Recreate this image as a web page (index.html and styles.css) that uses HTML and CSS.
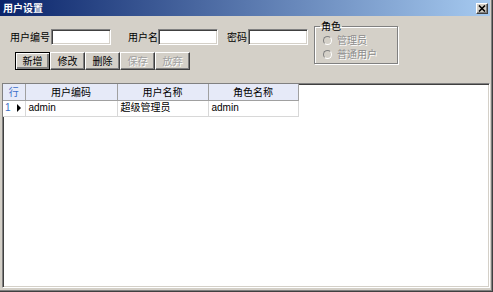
FILE: index.html
```html
<!DOCTYPE html>
<html lang="zh-CN">

<head>
    <meta charset="UTF-8">
    <title>用户设置</title>
    <link rel="stylesheet" href="styles.css">
</head>

<body>
    <div class="window">
        <div class="titlebar">
            <span class="title">用户设置</span>
            <span class="close-btn">
                <svg width="8" height="7" viewBox="0 0 8 7">
                    <path d="M1 0.5 L7 6.5 M7 0.5 L1 6.5" stroke="#000" stroke-width="1.6" />
                </svg>
            </span>
        </div>

        <div class="top">
            <div class="left">
                <div class="fields">
                    <label class="lbl">用户编号</label>
                    <span class="input"></span>
                    <label class="lbl lbl-name">用户名</label>
                    <span class="input"></span>
                    <label class="lbl lbl-pwd">密码</label>
                    <span class="input"></span>
                </div>
                <div class="toolbar">
                    <button class="btn btn-default">新增</button>
                    <button class="btn">修改</button>
                    <button class="btn">删除</button>
                    <button class="btn" disabled>保存</button>
                    <button class="btn" disabled>放弃</button>
                </div>
            </div>

            <fieldset class="group">
                <legend>角色</legend>
                <div class="radio"><span class="dot"></span>管理员</div>
                <div class="radio"><span class="dot"></span>普通用户</div>
            </fieldset>
        </div>

        <div class="grid">
            <table>
                <colgroup>
                    <col style="width: 22px">
                    <col style="width: 92px">
                    <col style="width: 91px">
                    <col style="width: 90px">
                </colgroup>
                <thead>
                    <tr>
                        <th class="ind">行</th>
                        <th>用户编码</th>
                        <th>用户名称</th>
                        <th>角色名称</th>
                    </tr>
                </thead>
                <tbody>
                    <tr>
                        <td class="ind"><span class="num">1</span><span class="arrow"></span></td>
                        <td>admin</td>
                        <td>超级管理员</td>
                        <td>admin</td>
                    </tr>
                </tbody>
            </table>
        </div>
    </div>
</body>

</html>
```

FILE: styles.css
```css
* {
    margin: 0;
    padding: 0;
    box-sizing: border-box;
}

body {
    width: 493px;
    height: 292px;
    overflow: hidden;
    font-family: "Liberation Sans", "Noto Sans CJK SC", sans-serif;
    font-size: 10px;
    line-height: 12px;
    color: #000;
    background: #d4d0c8;
}

/* Janela */
.window {
    width: 493px;
    height: 292px;
    display: flex;
    flex-direction: column;
    background: #d4d0c8;
    box-shadow: inset -1px -1px #404040, inset -2px -2px #808080, inset -3px -3px #d4d0c8;
}

.titlebar {
    height: 16px;
    margin-right: 3px;
    display: flex;
    align-items: center;
    justify-content: space-between;
    padding: 0 2px 0 3px;
    background: linear-gradient(to right, #0a246a, #a6caf0);
}

.title {
    color: #fff;
    font-weight: bold;
    font-family: "Noto Sans CJK SC", sans-serif;
    line-height: 16px;
}

.close-btn {
    width: 12px;
    height: 11px;
    display: flex;
    align-items: center;
    justify-content: center;
    background: #d4d0c8;
    border: 1px solid;
    border-color: #fff #404040 #404040 #fff;
    box-shadow: inset -1px -1px #808080;
}

/* Parte de cima */
.top {
    display: flex;
    padding-left: 10px;
}

.left {
    padding-top: 13px;
}

.fields {
    display: flex;
    align-items: center;
    height: 16px;
}

.lbl {
    font-family: "Noto Sans CJK SC", sans-serif;
    margin-right: 1px;
    white-space: nowrap;
}

.lbl-name {
    margin-left: 17px;
    margin-right: 0;
}

.lbl-pwd {
    margin-left: 9px;
}

.input {
    width: 60px;
    height: 16px;
    background: #fff;
    border: 1px solid;
    border-color: #808080 #fff #fff #808080;
    box-shadow: inset 1px 1px #404040, inset -1px -1px #d4d0c8;
}

.toolbar {
    display: flex;
    margin: 7px 0 0 5px;
}

.btn {
    width: 35px;
    height: 18px;
    font: inherit;
    font-family: "Noto Sans CJK SC", sans-serif;
    background: #d4d0c8;
    border: 1px solid;
    border-color: #fff #404040 #404040 #fff;
    box-shadow: inset -1px -1px #808080;
    color: #000;
}

.btn-default {
    border-color: #000;
    box-shadow: inset 1px 1px #fff, inset -2px -2px #808080;
}

.btn:disabled {
    color: #a0a0a0;
    text-shadow: 1px 1px #fff;
}

/* Grupo de papel */
.group {
    width: 84px;
    height: 44px;
    margin: 4px 0 0 6px;
    border: 1px solid #808080;
    box-shadow: 1px 1px #fff, inset 1px 1px #fff;
    padding: 1px 0 0 8px;
    font-family: "Noto Sans CJK SC", sans-serif;
}

.group legend {
    line-height: 12px;
    padding: 0 1px;
    margin-left: -3px;
}

.radio {
    display: flex;
    align-items: center;
    height: 14px;
    line-height: 14px;
    color: #8c8c8c;
    text-shadow: 1px 1px #fff;
}

.dot {
    width: 9px;
    height: 9px;
    border-radius: 50%;
    margin-right: 5px;
    background: #d4d0c8;
    border: 1px solid;
    border-color: #808080 #fff #fff #808080;
}

/* Tabela */
.grid {
    flex: 1;
    margin: 13px 3px 4px 2px;
    background: #fff;
    border: 1px solid;
    border-color: #808080 #fff #fff #808080;
    box-shadow: inset 1px 1px #404040, inset -1px -1px #d4d0c8;
}

table {
    table-layout: fixed;
    border-collapse: collapse;
    width: 295px;
}

th,
td {
    height: 16px;
    font-weight: normal;
    white-space: nowrap;
    overflow: hidden;
}

th {
    background: #e6eaf8;
    border-right: 1px solid #a0a0a0;
    border-bottom: 1px solid #a0a0a0;
    text-align: center;
    font-family: "Noto Sans CJK SC", sans-serif;
}

td {
    border-right: 1px solid #d8d8d8;
    border-bottom: 1px solid #d8d8d8;
    padding-left: 3px;
}

.ind {
    color: #3a6ec8;
}

td.ind {
    padding-left: 2px;
    background: #fff;
}

.num {
    display: inline-block;
    width: 12px;
}

.arrow {
    display: inline-block;
    width: 0;
    height: 0;
    border-top: 4px solid transparent;
    border-bottom: 4px solid transparent;
    border-left: 4px solid #000;
    vertical-align: middle;
}
```
